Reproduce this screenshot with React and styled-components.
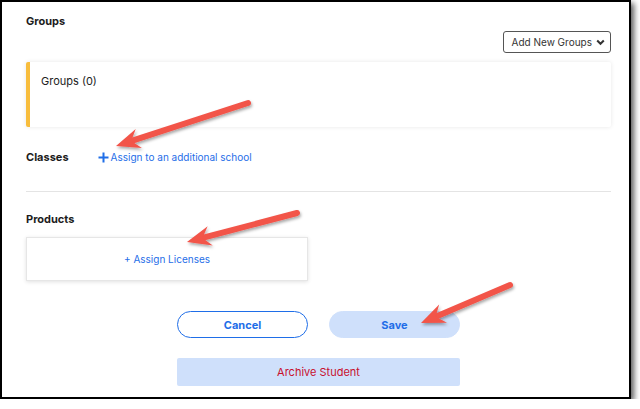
import React from "react";
import styled, { createGlobalStyle } from "styled-components";

// *** Global ***

const GlobalStyle = createGlobalStyle`
  html, body {
    margin: 0;
    padding: 0;
    background: #fff;
  }
  body {
    font-family: Inter, "Liberation Sans", sans-serif;
    color: #1f1f1f;
  }
  * {
    box-sizing: border-box;
  }
`;

// *** Styled components ***

const Frame = styled.div`
  position: relative;
  width: 631px;
  height: 399px;
  border: 2px solid #000;
  background: #fff;
  box-shadow: 3px 3px 6px rgba(0, 0, 0, 0.65);
  padding: 12px 18px 0 24px;
`;

const SectionTitle = styled.h3`
  margin: 0;
  font-size: 11px;
  font-weight: 700;
  line-height: 14px;
  color: #1c1c1c;
`;

const Toolbar = styled.div`
  display: flex;
  justify-content: flex-end;
  margin-top: 3px;
`;

const DropdownButton = styled.button`
  display: flex;
  align-items: center;
  gap: 4px;
  height: 22px;
  padding: 0 5px 0 7px;
  font-family: inherit;
  font-size: 10px;
  color: #333;
  background: #fff;
  border: 1px solid #555;
  border-radius: 3px;
`;

const GroupCard = styled.div`
  margin-top: 9px;
  height: 65px;
  background: #fff;
  border-left: 4px solid #f8bd3c;
  border-radius: 2px;
  box-shadow: 0 0 4px rgba(0, 0, 0, 0.1);
  padding: 12px 0 0 11px;
  font-size: 11px;
  color: #222;
`;

const ClassesRow = styled.div`
  display: flex;
  align-items: center;
  gap: 29px;
  height: 18px;
  margin-top: 21px;
`;

const LinkButton = styled.button`
  display: flex;
  align-items: center;
  gap: 2px;
  padding: 0;
  border: none;
  background: none;
  font-family: inherit;
  font-size: 10px;
  color: #1f6ee8;
`;

const Divider = styled.hr`
  margin: 25px 0 0 0;
  border: none;
  border-top: 1px solid #e4e4e4;
`;

const ProductsTitle = styled(SectionTitle)`
  margin-top: 20px;
`;

const ProductBox = styled.div`
  display: flex;
  justify-content: center;
  align-items: center;
  width: 282px;
  height: 44px;
  margin-top: 11px;
  border: 1px solid #e6e6e6;
  box-shadow: 0 1px 4px rgba(0, 0, 0, 0.12);
`;

const Actions = styled.div`
  display: flex;
  flex-direction: column;
  align-items: center;
  margin-top: 30px;
  gap: 20px;
`;

const ButtonRow = styled.div`
  display: flex;
  gap: 21px;
`;

const PillButton = styled.button`
  width: 131px;
  height: 27px;
  border-radius: 14px;
  font-family: inherit;
  font-size: 11px;
  font-weight: 700;
  color: #1f6ee8;
  background: ${(p) => (p.$filled ? "#cfe0fb" : "#fff")};
  border: 1px solid ${(p) => (p.$filled ? "#cfe0fb" : "#1f6ee8")};
`;

const ArchiveButton = styled.button`
  width: 283px;
  height: 28px;
  border: none;
  border-radius: 2px;
  background: #cfe0fb;
  font-family: inherit;
  font-size: 11px;
  color: #c8102e;
`;

const Overlay = styled.svg`
  position: absolute;
  left: -2px;
  top: -2px;
  width: 640px;
  height: 409px;
  pointer-events: none;
  overflow: visible;
`;

// *** Icons ***

const Chevron = () => (
  <svg width="9" height="7" viewBox="0 0 9 7">
    <path d="M1.2 1.5 L4.5 4.8 L7.8 1.5" fill="none" stroke="#333" strokeWidth="2" />
  </svg>
);

const Plus = () => (
  <svg width="11" height="11" viewBox="0 0 11 11">
    <path d="M5.5 0.5 V10.5 M0.5 5.5 H10.5" stroke="#1f6ee8" strokeWidth="2" />
  </svg>
);

// *** Arrows ***

const arrows = [
  { from: [248, 103], to: [116, 146] },
  { from: [297, 213], to: [187, 242] },
  { from: [510, 285], to: [421, 323] },
];

const Arrow = ({ from, to }) => {
  const dx = to[0] - from[0];
  const dy = to[1] - from[1];
  const len = Math.hypot(dx, dy);
  const ux = dx / len;
  const uy = dy / len;
  const nx = -uy;
  const ny = ux;
  const pt = (back, side) =>
    `${to[0] - ux * back + nx * side},${to[1] - uy * back + ny * side}`;
  const lineEnd = [to[0] - ux * 14, to[1] - uy * 14];
  return (
    <g>
      <line
        x1={from[0]}
        y1={from[1]}
        x2={lineEnd[0]}
        y2={lineEnd[1]}
        stroke="#f2544a"
        strokeWidth="6"
        strokeLinecap="round"
      />
      <polygon
        points={[pt(0, 0), pt(24, 10), pt(16, 0), pt(24, -10)].join(" ")}
        fill="#f2544a"
        strokeLinejoin="round"
      />
    </g>
  );
};

// *** App ***

export default function App() {
  return (
    <>
      <GlobalStyle />
      <Frame>
        <SectionTitle>Groups</SectionTitle>
        <Toolbar>
          <DropdownButton>
            Add New Groups <Chevron />
          </DropdownButton>
        </Toolbar>
        <GroupCard>Groups (0)</GroupCard>

        <ClassesRow>
          <SectionTitle>Classes</SectionTitle>
          <LinkButton>
            <Plus /> Assign to an additional school
          </LinkButton>
        </ClassesRow>

        <Divider />

        <ProductsTitle>Products</ProductsTitle>
        <ProductBox>
          <LinkButton>+ Assign Licenses</LinkButton>
        </ProductBox>

        <Actions>
          <ButtonRow>
            <PillButton>Cancel</PillButton>
            <PillButton $filled>Save</PillButton>
          </ButtonRow>
          <ArchiveButton>Archive Student</ArchiveButton>
        </Actions>

        <Overlay viewBox="0 0 640 409">
          <defs>
            <filter id="arrowShadow" x="-20%" y="-50%" width="140%" height="200%">
              <feDropShadow dx="1" dy="2" stdDeviation="1.5" floodColor="#000" floodOpacity="0.35" />
            </filter>
          </defs>
          <g filter="url(#arrowShadow)">
            {arrows.map((a, i) => (
              <Arrow key={i} {...a} />
            ))}
          </g>
        </Overlay>
      </Frame>
    </>
  );
}
